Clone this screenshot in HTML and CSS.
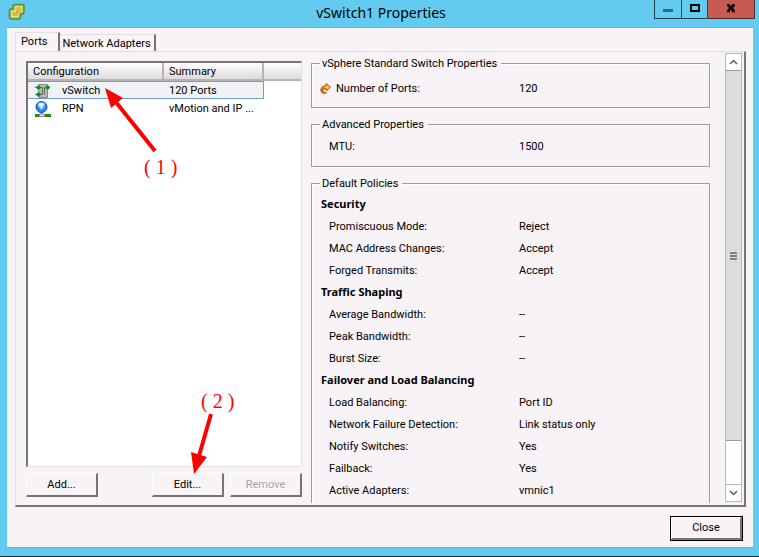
FILE: index.html
```
<!DOCTYPE html>
<html lang="en">
<head>
<meta charset="utf-8">
<title>vSwitch1 Properties</title>
<link rel="stylesheet" href="styles.css">
</head>
<body>
<div class="window">
  <header class="titlebar">
    <svg class="app-icon" width="18" height="18" viewBox="0 0 18 18" aria-hidden="true">
      <path d="M7 1.500h7.500q1.500 0 1.500 1.500v6q0 2-2 2h-1.500v3q0 2-2 2H3q-1.500 0-1.500-1.500V8q0-2 2-2H5V3.500q0-2 2-2z" fill="#b5d36c" stroke="#5b8c2c" stroke-width="1.500"/>
      <path d="M8 4h5.500v4.500H10v5H4V8.500h4z" fill="#9ab4a4" stroke="#dbe79a" stroke-width="1"/>
      <path d="M9 4.500h4v4H9zM5 9h4v4H5z" fill="#ffb018"/>
      <path d="M9 8.500h1.500M8 9.500h2" stroke="#e08a10"/>
    </svg>
    <h1>vSwitch1 Properties</h1>
    <div class="controls">
      <button class="ctl min" aria-label="Minimize"><svg width="12" height="12" viewBox="0 0 12 12"><path d="M1 6h10v3H1z" fill="#34677a"/></svg></button>
      <button class="ctl max" aria-label="Maximize"><svg width="12" height="12" viewBox="0 0 12 12"><path d="M2 2h8v6H2z" fill="none" stroke="#000" stroke-width="2"/></svg></button>
      <button class="ctl close" aria-label="Close window"><svg width="12" height="12" viewBox="0 0 12 12"><path d="M3 2l6 6M9 2L3 8" stroke="#000" stroke-width="2.500"/><path d="M2 2h3M7 2h3M2 8.500h3M7 8.500h3" stroke="#000" stroke-width="1.500"/></svg></button>
    </div>
  </header>
  <main class="client">
    <nav class="tabs">
      <button class="tab active">Ports</button>
      <button class="tab">Network Adapters</button>
    </nav>
    <section class="panel">
      <div class="left">
        <div class="list">
          <table>
            <colgroup><col class="c1"><col class="c2"><col></colgroup>
            <thead><tr><th>Configuration</th><th>Summary</th><th></th></tr></thead>
            <tbody>
              <tr class="selected">
                <td><span class="item"><svg width="16" height="16" viewBox="0 0 16 16" aria-hidden="true"><path d="M3.500 1.500h9v13h-9z" fill="#b9b9b9" stroke="#8a8a8a"/><path d="M0 4.500h5M11 4.500h4M0 11.500h5M5 4.500h2.500v7H5M11 4.500H9.500v7" fill="none" stroke="#6a6a6a"/><path d="M2 3h3v3H2zM11 3h3v3h-3zM2 10h3v3H2z" fill="#08a808" stroke="#087008" stroke-width=".5"/></svg>vSwitch</span></td>
                <td>120 Ports</td><td></td>
              </tr>
              <tr>
                <td><span class="item"><svg width="16" height="16" viewBox="0 0 16 16" aria-hidden="true"><circle cx="6.500" cy="6" r="5.500" fill="#2f86f2" stroke="#0a4fb4"/><path d="M3 2.500q3.500-2 7 0l-1 3-2 3H6L3.500 5.500z" fill="#a9d8ff"/><path d="M4 2.500h4V5H7v2H6V5H4z" fill="#fff"/><path d="M5 12h3v2H5z" fill="#bbb"/><path d="M0 13h16v3H0z" fill="#169016"/><path d="M4.500 13h5v2.500h-5z" fill="#e9e9e9" stroke="#888"/></svg>RPN</span></td>
                <td>vMotion and IP ...</td><td></td>
              </tr>
            </tbody>
          </table>
        </div>
        <div class="actions">
          <button class="btn add">Add...</button>
          <button class="btn">Edit...</button>
          <button class="btn" disabled>Remove</button>
        </div>
      </div>
      <div class="details">
        <fieldset>
          <legend>vSphere Standard Switch Properties</legend>
          <dl><div class="with-icon"><dt><svg width="12" height="12" viewBox="0 0 12 12" aria-hidden="true"><path d="M6 .5L10.500 4 6 8V5.500Q3 5 3 7.500q0 2 3.500 2.500Q1 11.500.8 7 1 3 6 2.800z" fill="#e8780c" stroke="#a84408" stroke-width=".8"/><path d="M6.500 2l3 2-3 2.500V5L3 4.500 6.500 3.500z" fill="#ffd42a"/></svg>Number of Ports:</dt><dd>120</dd></div></dl>
        </fieldset>
        <fieldset class="advanced">
          <legend>Advanced Properties</legend>
          <dl><div><dt>MTU:</dt><dd>1500</dd></div></dl>
        </fieldset>
        <fieldset class="policies">
          <legend>Default Policies</legend>
          <h2>Security</h2>
          <dl>
            <div><dt>Promiscuous Mode:</dt><dd>Reject</dd></div>
            <div><dt>MAC Address Changes:</dt><dd>Accept</dd></div>
            <div><dt>Forged Transmits:</dt><dd>Accept</dd></div>
          </dl>
          <h2>Traffic Shaping</h2>
          <dl>
            <div><dt>Average Bandwidth:</dt><dd>--</dd></div>
            <div><dt>Peak Bandwidth:</dt><dd>--</dd></div>
            <div><dt>Burst Size:</dt><dd>--</dd></div>
          </dl>
          <h2>Failover and Load Balancing</h2>
          <dl>
            <div><dt>Load Balancing:</dt><dd>Port ID</dd></div>
            <div><dt>Network Failure Detection:</dt><dd>Link status only</dd></div>
            <div><dt>Notify Switches:</dt><dd>Yes</dd></div>
            <div><dt>Failback:</dt><dd>Yes</dd></div>
            <div><dt>Active Adapters:</dt><dd>vmnic1</dd></div>
          </dl>
        </fieldset>
      </div>
      <div class="scrollbar">
        <button class="arrow" aria-label="Scroll up"><svg width="9" height="8" viewBox="0 0 9 8"><path d="M1 6l3.500-3.500L8 6" fill="none" stroke="#606060" stroke-width="1.500"/></svg></button>
        <div class="thumb"><svg width="7" height="8" viewBox="0 0 7 8"><path d="M0 1h7M0 4h7M0 7h7" stroke="#606060" stroke-width="1.500"/></svg></div>
        <div class="track"></div>
        <button class="arrow" aria-label="Scroll down"><svg width="9" height="8" viewBox="0 0 9 8"><path d="M1 2l3.500 3.500L8 2" fill="none" stroke="#606060" stroke-width="1.500"/></svg></button>
      </div>
    </section>
    <footer><button class="btn default">Close</button></footer>
  </main>
  <svg class="marks" width="320" height="500" viewBox="0 0 320 500" aria-hidden="true">
    <path d="M155 151L115 101M211 414L199 456" stroke="#f00" stroke-width="4"/>
    <path d="M105 88l18 10-12 10zM194 474l-3-22 16 5z" fill="#f00"/>
  </svg>
  <span class="mark one">( 1 )</span>
  <span class="mark two">( 2 )</span>
</div>
</body>
</html>
```
FILE: styles.css
```
* { box-sizing: border-box; }
body {
  margin: 0;
  font: 11px/14px Roboto, "Noto Sans", sans-serif;
  color: #000;
}
button { font: inherit; color: inherit; padding: 0; border-radius: 0; }
.window {
  position: relative;
  display: flex;
  flex-direction: column;
  height: 100vh;
  padding: 0 6px 8px 7px;
  background: #63caf0;
  border-bottom: 1px solid #222c30;
}
.titlebar {
  display: grid;
  grid-template-columns: 101px 1fr 101px;
  flex: none;
  height: 27px;
  margin-right: -2px;
}
.app-icon { margin: 3px 0 0 1px; }
h1 {
  margin: 0;
  font: 14px/26px "Noto Sans", sans-serif;
  text-align: center;
}
.controls { display: flex; height: 19px; }
.ctl {
  display: grid;
  place-items: center;
  width: 28px;
  background: none;
  border: 1px solid #27434e;
  border-top: 0;
}
.ctl + .ctl { border-left: 0; }
.ctl.max { width: 26px; }
.ctl.close { width: 47px; background: #c75a52; border-color: #4a2a2a; }
.client {
  display: flex;
  flex-direction: column;
  flex: 1;
  min-height: 0;
  padding: 4px 7px 6px 8px;
  background: #f7f3f7;
  border-top: 1px solid #94a6b4;
  border-bottom: 1px solid #94a6b4;
}
.tabs { display: flex; align-items: flex-end; height: 19px; flex: none; }
.tab {
  height: 17px;
  padding: 1px 3px 0 2px;
  background: none;
  border: 0 solid #fff;
  border-top: 1px solid #e3dfe3;
  border-right: 2px solid #777377;
}
.tab.active { height: 19px; padding: 0 11px 1px 5px; border-left: 1px solid #e3dfe3; }
.panel {
  display: flex;
  flex: 1;
  min-height: 0;
  padding: 1px 2px 2px 10px;
  border: 1px solid #e3dfe3;
  border-right: 2px solid #777377;
  border-bottom: 2px solid #777377;
}
.left { display: flex; flex-direction: column; flex: none; width: 276px; padding: 8px 0 6px; }
.list {
  flex: 1;
  background: #fff;
  border: 1px solid #e3dfe3;
  border-top: 2px solid #777377;
  border-left: 2px solid #777377;
}
table { width: 100%; table-layout: fixed; border-collapse: separate; border-spacing: 0; }
.c1 { width: 136px; }
.c2 { width: 100px; }
th {
  height: 18px;
  padding: 2px 5px 0;
  font-weight: 400;
  text-align: left;
  background: linear-gradient(#fff, #dddbdd);
  border-right: 2px solid #b5b3b5;
  border-bottom: 2px solid #b5b3b5;
}
th:last-child { border-right-width: 0; }
td { height: 18px; padding: 1px 5px 0; white-space: nowrap; }
.selected td { background: #eff3f8; border-top: 1px solid #6f9fce; border-bottom: 1px solid #6f9fce; }
.selected td:nth-child(2) { border-right: 1px solid #6f9fce; }
.selected td:last-child { background: none; border: 0; }
.item { display: flex; align-items: center; gap: 11px; height: 15px; padding-left: 2px; }
.actions { display: flex; gap: 6px; padding-top: 6px; }
.btn {
  width: 72px;
  height: 24px;
  background: #f7f3f7;
  border: 1px solid #fff;
  border-right: 2px solid #777377;
  border-bottom: 2px solid #777377;
}
.btn.add { margin-right: auto; }
.btn:disabled { color: #a5a2a5; text-shadow: 1px 1px 0 #fff; }
.details { flex: 1; min-width: 0; overflow: hidden; padding: 2px 15px 0 9px; }
fieldset {
  min-width: 0;
  margin: 0 0 8px;
  padding: 6px 8px 8px;
  border: 1px solid #9d9b9d;
  box-shadow: 1px 1px 0 #fff, inset 1px 1px 0 #fff;
}
.advanced { padding-top: 3px; padding-bottom: 9px; }
.policies { padding-top: 2px; }
legend { padding: 2px 4px 0 2px; background: #f7f3f7; }
dl, dd, h2 { margin: 0; }
dl > div {
  display: grid;
  grid-template-columns: 190px 1fr;
  align-items: center;
  height: 22px;
  padding-top: 2px;
}
.advanced dl, .policies dl { padding-left: 9px; }
h2 {
  padding-left: 1px;
  font: 700 11px/22px "Noto Sans", sans-serif;
}
dl > .with-icon { grid-template-columns: 199px 1fr; }
.with-icon dt { display: flex; align-items: center; gap: 4px; }
.scrollbar {
  display: flex;
  flex-direction: column;
  width: 17px;
  margin-bottom: 1px;
  background: #fff;
  border: 1px solid #b8b6b8;
}
.arrow { display: grid; place-items: center; height: 16px; background: #fff; border: 0; }
.thumb {
  display: grid;
  place-items: center;
  flex: 371;
  background: #dedcde;
  border: solid #9d9b9d;
  border-width: 1px 0;
}
.track { flex: 43; border-bottom: 1px solid #b8b6b8; }
footer { display: flex; justify-content: flex-end; padding: 10px 4px 0 0; }
.btn.default { width: 71px; height: 23px; margin-bottom: 1px; outline: 1px solid #000; }
.marks { position: absolute; left: 0; top: 0; pointer-events: none; }
.mark { position: absolute; color: #f00; font: 20px/22px "Liberation Serif", serif; }
.one { left: 144px; top: 156px; }
.two { left: 201px; top: 390px; }
```
